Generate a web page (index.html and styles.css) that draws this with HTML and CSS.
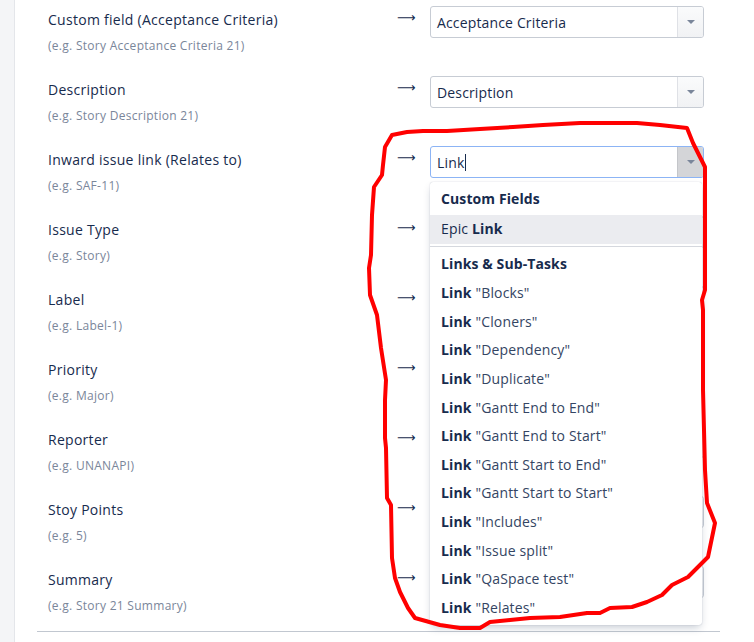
FILE: index.html
```html
<!DOCTYPE html>
<html>
<head>
<meta charset="utf-8">
<link rel="stylesheet" href="styles.css">
</head>
<body>
<div class="page">
  <div class="sidebar"></div>
  <div class="panel">
    <div class="rows">
      <div class="row">
        <div class="field"><div class="label">Custom field (Acceptance Criteria)</div><div class="hint">(e.g. Story Acceptance Criteria 21)</div></div>
        <div class="arrow">⟶</div>
        <div class="select"><div class="value">Acceptance Criteria</div><div class="btn"><span class="caret"></span></div></div>
      </div>
      <div class="row">
        <div class="field"><div class="label">Description</div><div class="hint">(e.g. Story Description 21)</div></div>
        <div class="arrow">⟶</div>
        <div class="select"><div class="value">Description</div><div class="btn"><span class="caret"></span></div></div>
      </div>
      <div class="row">
        <div class="field"><div class="label">Inward issue link (Relates to)</div><div class="hint">(e.g. SAF-11)</div></div>
        <div class="arrow">⟶</div>
        <div class="select-wrap">
          <div class="select focused"><div class="value">Link<span class="cursor"></span></div><div class="btn"><span class="caret"></span></div></div>
          <div class="menu">
            <div class="group">Custom Fields</div>
            <div class="item active">Epic <b>Link</b></div>
            <div class="sep"></div>
            <div class="group second">Links &amp; Sub-Tasks</div>
            <div class="item"><b>Link</b> "Blocks"</div>
            <div class="item"><b>Link</b> "Cloners"</div>
            <div class="item"><b>Link</b> "Dependency"</div>
            <div class="item"><b>Link</b> "Duplicate"</div>
            <div class="item"><b>Link</b> "Gantt End to End"</div>
            <div class="item"><b>Link</b> "Gantt End to Start"</div>
            <div class="item"><b>Link</b> "Gantt Start to End"</div>
            <div class="item"><b>Link</b> "Gantt Start to Start"</div>
            <div class="item"><b>Link</b> "Includes"</div>
            <div class="item"><b>Link</b> "Issue split"</div>
            <div class="item"><b>Link</b> "QaSpace test"</div>
            <div class="item"><b>Link</b> "Relates"</div>
          </div>
        </div>
      </div>
      <div class="row">
        <div class="field"><div class="label">Issue Type</div><div class="hint">(e.g. Story)</div></div>
        <div class="arrow">⟶</div>
        <div class="select"><div class="value"></div><div class="btn"><span class="caret"></span></div></div>
      </div>
      <div class="row">
        <div class="field"><div class="label">Label</div><div class="hint">(e.g. Label-1)</div></div>
        <div class="arrow">⟶</div>
        <div class="select"><div class="value"></div><div class="btn"><span class="caret"></span></div></div>
      </div>
      <div class="row">
        <div class="field"><div class="label">Priority</div><div class="hint">(e.g. Major)</div></div>
        <div class="arrow">⟶</div>
        <div class="select"><div class="value"></div><div class="btn"><span class="caret"></span></div></div>
      </div>
      <div class="row">
        <div class="field"><div class="label">Reporter</div><div class="hint">(e.g. UNANAPI)</div></div>
        <div class="arrow">⟶</div>
        <div class="select"><div class="value"></div><div class="btn"><span class="caret"></span></div></div>
      </div>
      <div class="row">
        <div class="field"><div class="label">Stoy Points</div><div class="hint">(e.g. 5)</div></div>
        <div class="arrow">⟶</div>
        <div class="select"><div class="value"></div><div class="btn"><span class="caret"></span></div></div>
      </div>
      <div class="row">
        <div class="field"><div class="label">Summary</div><div class="hint">(e.g. Story 21 Summary)</div></div>
        <div class="arrow">⟶</div>
        <div class="select"><div class="value"></div><div class="btn"><span class="caret"></span></div></div>
      </div>
    </div>
    <div class="divider"></div>
  </div>
</div>
<svg class="annotation" width="754" height="642" viewBox="0 0 754 642">
  <path d="M440,131 L423,131 L407,132 L392,135 L385,147 L383,165 L382,175 L374,187 L372,215 L371,255 L369,268 L370,295 L377,315 L381,348 L386,380 L385,400 L385,438 L386,448 L387,498 L391,505 L392,558 L395,578 L400,592 L408,608 L415,618 L440,625 L460,628 L480,628 L490,622 L510,620 L530,618 L560,617 L587,613 L600,613 L610,608 L632,607 L647,602 L662,595 L672,585 L688,577 L697,568 L708,557 L715,523 L707,503 L705,470 L703,390 L703,310 L702,300 L705,290 L705,167 L700,157 L693,143 L687,128 L660,125 L637,123 L580,123 L543,125 L513,127 L480,129 L447,131 Z" fill="none" stroke="#ff0000" stroke-width="4" stroke-linejoin="round" stroke-linecap="round"/>
</svg>
</body>
</html>
```
FILE: styles.css
```css
html, body {
  margin: 0;
  padding: 0;
  background: #ffffff;
  font-family: "Open Sans", "Noto Sans", sans-serif;
  color: #172b4d;
  overflow: hidden;
}
.page {
  display: flex;
  width: 754px;
  height: 642px;
}
.sidebar {
  width: 14px;
  flex: none;
  background: #f4f5f7;
  border-right: 1px solid #e4e6ea;
}
.panel {
  flex: 1;
  display: flex;
  flex-direction: column;
}
.rows {
  display: flex;
  flex-direction: column;
  padding-left: 33px;
}
.row {
  height: 70px;
  display: grid;
  grid-template-columns: 349px 33px 274px;
  align-items: start;
}
.field {
  padding-top: 10px;
}
.label {
  font-size: 14px;
  line-height: 20px;
  letter-spacing: 0.28px;
  color: #172b4d;
  white-space: nowrap;
}
.hint {
  margin-top: 8px;
  font-size: 12px;
  line-height: 16px;
  letter-spacing: 0.28px;
  color: #7a869a;
  white-space: nowrap;
}
.arrow {
  padding-top: 8px;
  font-family: "DejaVu Sans", sans-serif;
  font-size: 13px;
  line-height: 20px;
  color: #172b4d;
}
.select-wrap {
  position: relative;
}
.select {
  margin-top: 6px;
  height: 32px;
  box-sizing: border-box;
  border: 1px solid #c7ccd4;
  border-radius: 3px;
  display: flex;
  background: #ffffff;
}
.select .value {
  flex: 1;
  padding-left: 6px;
  font-size: 14px;
  line-height: 31px;
  letter-spacing: 0.15px;
  color: #172b4d;
  white-space: nowrap;
  overflow: hidden;
}
.select .btn {
  width: 25px;
  border-left: 1px solid #dfe1e6;
  background: linear-gradient(#fafbfc, #f1f2f4);
  display: flex;
  align-items: center;
  justify-content: center;
  border-radius: 0 2px 2px 0;
}
.caret {
  width: 0;
  height: 0;
  border-left: 4px solid transparent;
  border-right: 4px solid transparent;
  border-top: 4px solid #7a869a;
}
.select.focused {
  border-color: #8cb4f5;
}
.select.focused .btn {
  background: #d4d5d8;
  border-left-color: #c4c6ca;
}
.cursor {
  display: inline-block;
  width: 1px;
  height: 17px;
  background: #172b4d;
  vertical-align: -3px;
  margin-left: 1px;
}
.menu {
  position: absolute;
  left: 0;
  top: 42px;
  width: 272px;
  padding: 3px 0 2px;
  background: #ffffff;
  border-radius: 3px;
  box-shadow: 0 4px 8px -2px rgba(9, 30, 66, 0.25), 0 0 1px rgba(9, 30, 66, 0.31);
  z-index: 5;
}
.group {
  height: 28px;
  line-height: 28px;
  padding-left: 11px;
  font-size: 14px;
  font-weight: 700;
  letter-spacing: 0.1px;
  color: #172b4d;
}
.group.second {
  height: 29px;
  line-height: 28px;
}
.item {
  height: 28.65px;
  line-height: 28.65px;
  padding-left: 11px;
  font-size: 14px;
  letter-spacing: 0.15px;
  color: #344563;
  white-space: nowrap;
}
.item b {
  color: #172b4d;
  font-weight: 700;
}
.item.active {
  height: 29px;
  line-height: 28px;
  margin-top: 2px;
  background: #ebecf0;
  color: #172b4d;
}
.sep {
  height: 1px;
  background: #d5d8de;
  margin: 2px 0 3px;
}
.divider {
  margin: 1px 34px 0 22px;
  height: 1px;
  background: #c1c7d0;
}
.annotation {
  position: absolute;
  left: 0;
  top: 0;
  pointer-events: none;
  z-index: 10;
}
```
